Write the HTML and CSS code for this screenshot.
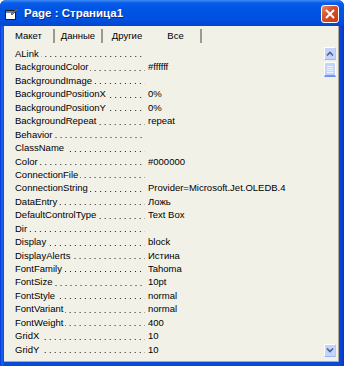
FILE: index.html
```html
<!DOCTYPE html>
<html lang="ru">
<head>
    <meta charset="UTF-8">
    <title>Page : Страница1</title>
    <link rel="stylesheet" href="styles.css">
</head>
<body>
<div class="window">
    <div class="titlebar">
        <svg class="app-icon" width="13" height="12" viewBox="0 0 13 12">
            <rect x="0.5" y="2.5" width="10" height="9" fill="#fff" stroke="#1b1b1b"/>
            <rect x="1" y="3" width="9" height="2" fill="#6a7fb5"/>
            <path d="M6 6 L12 0.5 L12.8 1.5 L7 7 Z" fill="#8c8c8c" stroke="#333" stroke-width="0.6"/>
        </svg>
        <span class="title">Page : Страница1</span>
        <div class="close">
            <svg width="12" height="12" viewBox="0 0 12 12">
                <path d="M2 2 L10 10 M10 2 L2 10" stroke="#fff" stroke-width="2"/>
            </svg>
        </div>
    </div>
    <div class="content">
        <div class="tabs">
            <div class="tab t1 sep">Макет</div>
            <div class="tab t2 sep">Данные</div>
            <div class="tab t3">Другие</div>
            <div class="tab t4 active sep">Все</div>
        </div>
        <div class="pane">
            <div class="props">
                <div class="row"><span class="label"><span class="name">ALink</span><span class="dots"></span></span><span class="value"></span></div>
                <div class="row"><span class="label"><span class="name">BackgroundColor</span><span class="dots"></span></span><span class="value">#ffffff</span></div>
                <div class="row"><span class="label"><span class="name">BackgroundImage</span><span class="dots"></span></span><span class="value"></span></div>
                <div class="row"><span class="label"><span class="name">BackgroundPositionX</span><span class="dots"></span></span><span class="value">0%</span></div>
                <div class="row"><span class="label"><span class="name">BackgroundPositionY</span><span class="dots"></span></span><span class="value">0%</span></div>
                <div class="row"><span class="label"><span class="name">BackgroundRepeat</span><span class="dots"></span></span><span class="value">repeat</span></div>
                <div class="row"><span class="label"><span class="name">Behavior</span><span class="dots"></span></span><span class="value"></span></div>
                <div class="row"><span class="label"><span class="name">ClassName</span><span class="dots"></span></span><span class="value"></span></div>
                <div class="row"><span class="label"><span class="name">Color</span><span class="dots"></span></span><span class="value">#000000</span></div>
                <div class="row"><span class="label"><span class="name">ConnectionFile</span><span class="dots"></span></span><span class="value"></span></div>
                <div class="row"><span class="label"><span class="name">ConnectionString</span><span class="dots"></span></span><span class="value">Provider=Microsoft.Jet.OLEDB.4</span></div>
                <div class="row"><span class="label"><span class="name">DataEntry</span><span class="dots"></span></span><span class="value">Ложь</span></div>
                <div class="row"><span class="label"><span class="name">DefaultControlType</span><span class="dots"></span></span><span class="value">Text Box</span></div>
                <div class="row"><span class="label"><span class="name">Dir</span><span class="dots"></span></span><span class="value"></span></div>
                <div class="row"><span class="label"><span class="name">Display</span><span class="dots"></span></span><span class="value">block</span></div>
                <div class="row"><span class="label"><span class="name">DisplayAlerts</span><span class="dots"></span></span><span class="value">Истина</span></div>
                <div class="row"><span class="label"><span class="name">FontFamily</span><span class="dots"></span></span><span class="value">Tahoma</span></div>
                <div class="row"><span class="label"><span class="name">FontSize</span><span class="dots"></span></span><span class="value">10pt</span></div>
                <div class="row"><span class="label"><span class="name">FontStyle</span><span class="dots"></span></span><span class="value">normal</span></div>
                <div class="row"><span class="label"><span class="name">FontVariant</span><span class="dots"></span></span><span class="value">normal</span></div>
                <div class="row"><span class="label"><span class="name">FontWeight</span><span class="dots"></span></span><span class="value">400</span></div>
                <div class="row"><span class="label"><span class="name">GridX</span><span class="dots"></span></span><span class="value">10</span></div>
                <div class="row"><span class="label"><span class="name">GridY</span><span class="dots"></span></span><span class="value">10</span></div>
            </div>
            <div class="scrollbar">
                <div class="sb-btn">
                    <svg width="8" height="5" viewBox="0 0 8 5"><path d="M1 4.5 L4 1.5 L7 4.5" fill="none" stroke="#4d6185" stroke-width="1.6"/></svg>
                </div>
                <div class="sb-thumb"><i></i><i></i><i></i><i></i></div>
                <div class="sb-track"></div>
                <div class="sb-btn">
                    <svg width="8" height="5" viewBox="0 0 8 5"><path d="M1 0.5 L4 3.5 L7 0.5" fill="none" stroke="#4d6185" stroke-width="1.6"/></svg>
                </div>
            </div>
        </div>
    </div>
</div>
</body>
</html>
```
FILE: styles.css
```css
body {
    margin: 0;
    padding: 0;
    font-family: "Liberation Sans", Arial, sans-serif;
    background-color: #ffffff;
}

.window {
    width: 344px;
    height: 366px;
    box-sizing: border-box;
    padding: 0 5px 4px 4px;
    background: linear-gradient(to right, #0831d9 0px, #166aee 2px, #0a4ad9 4px, #0a4ad9 calc(100% - 5px), #0a3fd0 calc(100% - 2px), #0831d9 100%);
    display: flex;
    flex-direction: column;
    border-radius: 6px 6px 0 0;
    overflow: hidden;
}

.titlebar {
    height: 26px;
    margin: 0 -5px 0 -4px;
    padding: 0 5px 0 5px;
    display: flex;
    align-items: center;
    background: linear-gradient(#3d8cf7 0px, #0a5de8 3px, #0055e5 8px, #0050df 20px, #0046cf 26px);
}

.app-icon {
    margin-right: 6px;
    margin-top: 1px;
}

.title {
    flex: 1;
    color: #ffffff;
    font-weight: bold;
    font-size: 11.5px;
    text-shadow: 1px 1px 0 #0a2a8a;
}

.close {
    width: 18px;
    height: 18px;
    box-sizing: border-box;
    border: 1px solid #ffffff;
    border-radius: 3px;
    background: linear-gradient(135deg, #e98a6a 0%, #d8502c 40%, #c53a12 100%);
    display: flex;
    align-items: center;
    justify-content: center;
    margin-top: 1px;
}

.content {
    flex: 1;
    display: flex;
    flex-direction: column;
    background-color: #f2f1e8;
    border-right: 1px solid #aca899;
    border-bottom: 1px solid #aca899;
}

.tabs {
    height: 20px;
    display: flex;
    align-items: center;
    font-size: 9.5px;
    color: #000000;
}

.tab {
    height: 14px;
    line-height: 14px;
    text-align: center;
    box-sizing: border-box;
}

.tab.sep {
    border-right: 2px solid #9e9b8c;
}

.t1 { width: 51px; }
.t2 { width: 48px; }
.t3 { width: 48px; }
.t4 { width: 51px; }

.pane {
    flex: 1;
    display: flex;
    overflow: hidden;
}

.props {
    flex: 1;
    min-width: 0;
    padding: 1px 0 0 11px;
    font-size: 9.5px;
    color: #000000;
    overflow: hidden;
}

.row {
    display: flex;
    height: 13.45px;
    line-height: 13.45px;
    white-space: nowrap;
}

.label {
    flex: none;
    width: 130px;
    margin-right: 3px;
    display: flex;
}

.name {
    flex: none;
}

.dots {
    flex: 1;
    margin-left: 2px;
    background-image: linear-gradient(to right, #222222 1px, transparent 1px);
    background-size: 5px 1px;
    background-repeat: repeat-x;
    background-position: right 0 bottom 3px;
}

.value {
    flex: 1;
    min-width: 0;
    overflow: hidden;
    padding-right: 2px;
}

.scrollbar {
    width: 12px;
    margin: 1px 2px 4px 0;
    display: flex;
    flex-direction: column;
}

.sb-btn {
    height: 13px;
    box-sizing: border-box;
    border: 1px solid #ffffff;
    border-bottom-color: #9bb5f0;
    border-right-color: #b7c8f5;
    background: #c3d3fd;
    display: flex;
    align-items: center;
    justify-content: center;
}

.sb-thumb {
    height: 15px;
    margin-top: 2px;
    box-sizing: border-box;
    border: 1px solid #ffffff;
    border-bottom: 2px solid #6c95f1;
    background: #c3d3fd;
    display: flex;
    flex-direction: column;
    justify-content: center;
    gap: 1px;
    padding: 0 2px;
}

.sb-thumb i {
    display: block;
    height: 1px;
    background: #eef3ff;
}

.sb-track {
    flex: 1;
}
```
